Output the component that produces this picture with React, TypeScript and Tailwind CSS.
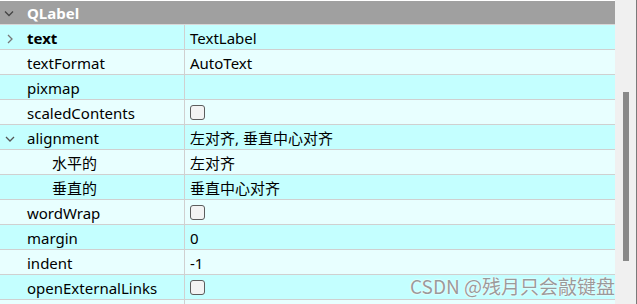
import React from "react";

type Row = {
  name: string;
  value?: string;
  check?: boolean;
  bold?: boolean;
  expand?: "closed" | "open";
  sub?: boolean;
};

const rows: Row[] = [
  { name: "text", value: "TextLabel", bold: true, expand: "closed" },
  { name: "textFormat", value: "AutoText" },
  { name: "pixmap", value: "" },
  { name: "scaledContents", check: true },
  { name: "alignment", value: "左对齐, 垂直中心对齐", expand: "open" },
  { name: "水平的", value: "左对齐", sub: true },
  { name: "垂直的", value: "垂直中心对齐", sub: true },
  { name: "wordWrap", check: true },
  { name: "margin", value: "0" },
  { name: "indent", value: "-1" },
  { name: "openExternalLinks", check: true },
  { name: "", value: "" },
];

function Chevron({ open }: { open: boolean }) {
  return (
    <svg width="10" height="10" viewBox="0 0 10 10" className="absolute left-[5px] top-[9px]">
      {open ? (
        <path d="M1 3 L5 7 L9 3" fill="none" stroke="#555" strokeWidth="1.3" />
      ) : (
        <path d="M3 1 L7 5 L3 9" fill="none" stroke="#777" strokeWidth="1.3" />
      )}
    </svg>
  );
}

export default function App() {
  return (
    <div
      className="relative w-[637px] h-[304px] overflow-hidden bg-white flex text-[15px] text-black"
      style={{ fontFamily: '"Noto Sans", "Noto Sans CJK SC", sans-serif' }}
    >
      <div className="w-[615px] pt-[1px] flex flex-col">
        {/* group header */}
        <div className="relative h-[24px] shrink-0 bg-[#a0a0a0] border-b border-[#d8d8d8] flex items-center">
          <svg width="10" height="8" viewBox="0 0 10 8" className="absolute left-[4px] top-[9px]">
            <path d="M1 1.5 L5 5.5 L9 1.5" fill="none" stroke="#444" strokeWidth="1.3" />
          </svg>
          <span className="pl-[27px] pt-[1px] font-bold text-white leading-none">QLabel</span>
        </div>
        {rows.map((r, i) => (
          <div
            key={i}
            className={
              "flex h-[25px] shrink-0 border-b border-[#d0d0d0] " +
              (i % 2 === 0 ? "bg-[#c4ffff]" : "bg-[#e8ffff]")
            }
          >
            <div className="relative w-[185px] shrink-0 border-r border-[#d0d0d0] flex items-center">
              {r.expand && <Chevron open={r.expand === "open"} />}
              <span className={(r.sub ? "pl-[52px] pt-[2px] " : "pl-[27px] pt-[2px] ") + (r.bold ? "font-bold" : "")}>
                {r.name}
              </span>
            </div>
            <div className="flex-1 flex items-center pl-[5px]">
              {r.check ? (
                <div className="w-[15px] h-[15px] mt-[1px] rounded-[3px] border border-[#5c5c5c] bg-[#f3f3f3]" />
              ) : (
                <span className="pt-[2px]">{r.value}</span>
              )}
            </div>
          </div>
        ))}
      </div>
      {/* scrollbar */}
      <div className="w-[22px] bg-[#f0f0f0] border-r border-[#7a7a7a] relative">
        <div className="absolute left-[8px] top-[92px] w-[6px] h-[169px] bg-[#898989]" />
      </div>
      {/* watermark */}
      <div
        className="absolute left-[410px] top-[276px] text-[19px] text-[#9a9a9a] leading-none"
        style={{
          fontFamily: '"Noto Sans CJK SC", sans-serif',
          textShadow: "0 0 2px #fff, 0 0 1px #fff",
        }}
      >
        CSDN @残月只会敲键盘
      </div>
    </div>
  );
}
